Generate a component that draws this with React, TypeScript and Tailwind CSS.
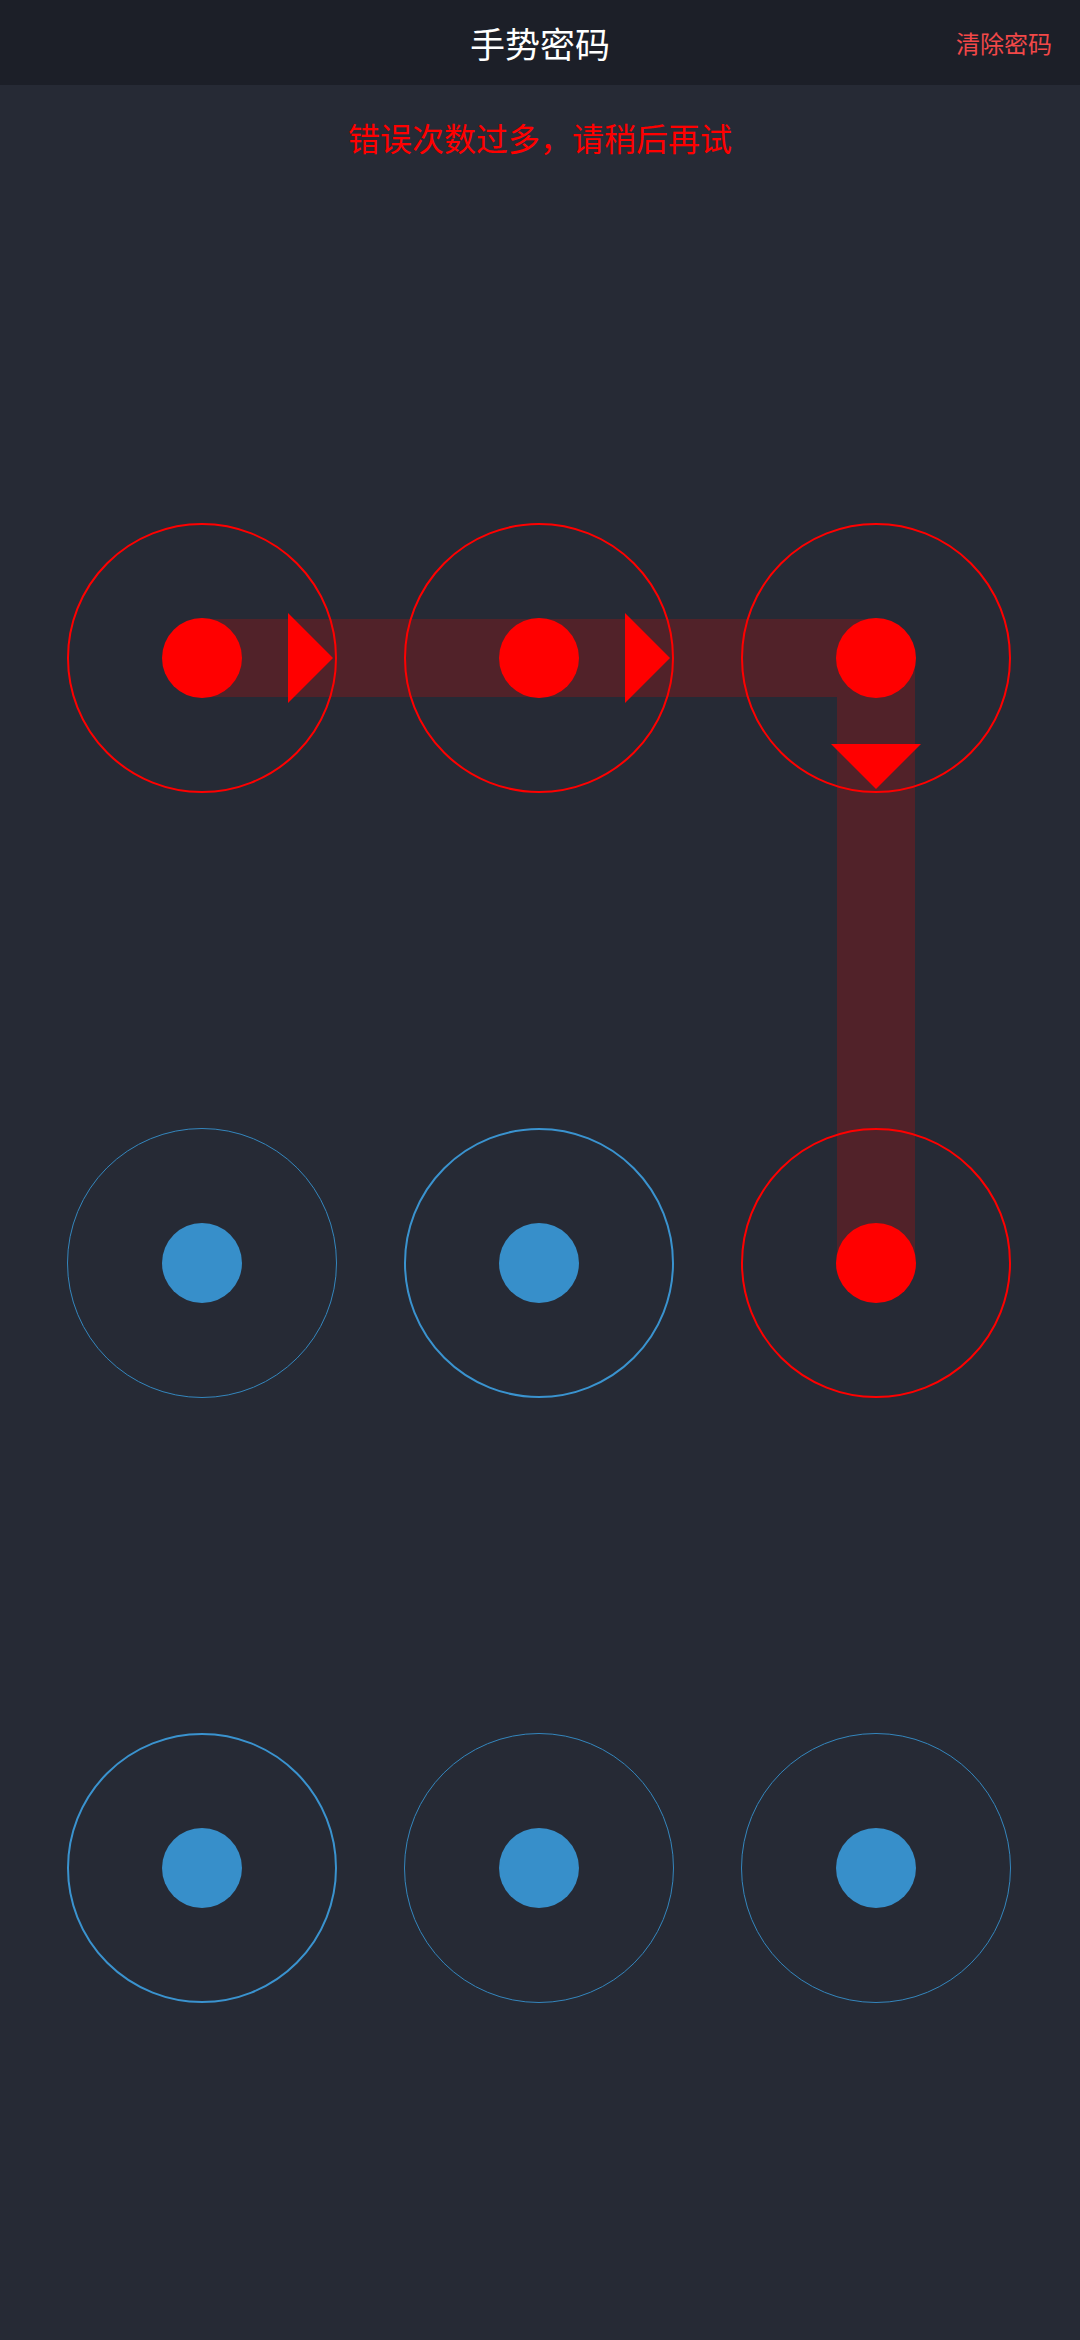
const RED = "#ff0000";

type Cell = { active: boolean; thick: boolean };

// 3x3 gesture cells, row by row
const cells: Cell[] = [
  { active: true, thick: true },
  { active: true, thick: true },
  { active: true, thick: true },
  { active: false, thick: false },
  { active: false, thick: true },
  { active: true, thick: true },
  { active: false, thick: true },
  { active: false, thick: false },
  { active: false, thick: false },
];

function Node({ active, thick }: Cell) {
  const ring = active
    ? "border-2 border-[#ff0000]"
    : thick
      ? "border-2 border-[#3a93cf]"
      : "border border-[#3486bd]";
  return (
    <div className={`relative z-10 flex h-[270px] w-[270px] items-center justify-center rounded-full ${ring}`}>
      <div className={`h-[80px] w-[80px] rounded-full ${active ? "bg-[#ff0000]" : "bg-[#378fca]"}`} />
    </div>
  );
}

function Trail() {
  return (
    <svg className="pointer-events-none absolute left-0 top-0 z-0" width="944" height="945" viewBox="0 0 944 945">
      <rect x="135" y="96" width="674" height="78" fill="#512229" />
      <rect x="770" y="135" width="78" height="605" fill="#512229" />
      <polygon points="221,90 266,135 221,180" fill={RED} />
      <polygon points="558,90 603,135 558,180" fill={RED} />
      <polygon points="764,221 854,221 809,266" fill={RED} />
    </svg>
  );
}

export default function App() {
  return (
    <div className="min-h-[2340px] w-[1080px] bg-[#262a35] font-['Noto_Sans_CJK_SC','Noto_Sans',sans-serif]">
      <header className="relative flex h-[85px] items-center justify-center bg-[#1c1f28]">
        <h1 className="text-[35px] leading-none text-white">手势密码</h1>
        <button className="absolute right-[28px] top-1/2 -translate-y-1/2 text-[24px] leading-none text-[#f24848]">
          清除密码
        </button>
      </header>

      <p className="mt-[33px] text-center text-[32px] leading-[38px] text-[#ff0000]">
        错误次数过多，请稍后再试
      </p>

      <div className="relative ml-[67px] mt-[367px] grid w-[944px] grid-cols-[270px_270px_270px] gap-x-[67px] gap-y-[335px]">
        <Trail />
        {cells.map((c, i) => (
          <Node key={i} active={c.active} thick={c.thick} />
        ))}
      </div>
    </div>
  );
}
